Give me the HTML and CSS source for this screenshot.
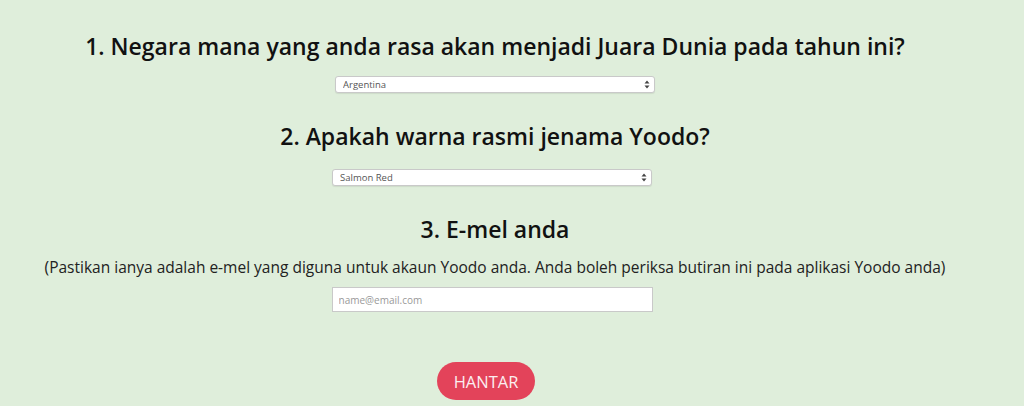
FILE: index.html
```html
<!DOCTYPE html>
<html lang="ms">
<head>
    <meta charset="UTF-8">
    <meta name="viewport" content="width=device-width, initial-scale=1.0">
    <title>Kuiz Yoodo</title>
    <link rel="stylesheet" href="styles.css">
</head>
<body>

    <form class="quiz" onsubmit="return false">

        <!-- Soalan 1 -->
        <h2 class="question q1">1. Negara mana yang anda rasa akan menjadi Juara Dunia pada tahun ini?</h2>
        <div class="select-wrap sw1">
            <select class="field select">
                <option>Argentina</option>
                <option>Brazil</option>
                <option>Perancis</option>
            </select>
            <svg class="arrows" width="6" height="9" viewBox="0 0 6 9"><path d="M3 0.5 L5.5 3.5 H0.5 Z M3 8.5 L5.5 5.5 H0.5 Z" fill="#444"/></svg>
        </div>

        <!-- Soalan 2 -->
        <h2 class="question q2">2. Apakah warna rasmi jenama Yoodo?</h2>
        <div class="select-wrap sw2">
            <select class="field select">
                <option>Salmon Red</option>
                <option>Sky Blue</option>
            </select>
            <svg class="arrows" width="6" height="9" viewBox="0 0 6 9"><path d="M3 0.5 L5.5 3.5 H0.5 Z M3 8.5 L5.5 5.5 H0.5 Z" fill="#444"/></svg>
        </div>

        <!-- Soalan 3 -->
        <h2 class="question q3">3. E-mel anda</h2>
        <p class="note">(Pastikan ianya adalah e-mel yang diguna untuk akaun Yoodo anda. Anda boleh periksa butiran ini pada aplikasi Yoodo anda)</p>
        <input class="field email" type="email" placeholder="name@email.com">

        <button class="submit" type="submit">HANTAR</button>
    </form>

</body>
</html>
```

FILE: styles.css
```css
body {
    margin: 0;
    background-color: #dfeedb;
    font-family: "Open Sans", "DejaVu Sans", sans-serif;
    color: #111;
}
.quiz {
    width: 990px;
    padding-top: 30px;
    display: flex;
    flex-direction: column;
    align-items: center;
    text-align: center;
}
.question {
    margin: 0;
    font-size: 23px;
    line-height: 32px;
    font-weight: 600;
    color: #111;
}
.q2, .q3 {
    margin-top: 27px;
}
.select-wrap {
    position: relative;
    width: 320px;
    height: 17px;
}
.sw1 {
    margin-top: 14px;
}
.sw2 {
    margin-top: 17px;
    left: -3px;
}
.field {
    box-sizing: border-box;
    background: #fff;
    border: 1px solid #c9c9c9;
    font-family: "Open Sans", "DejaVu Sans", sans-serif;
    color: #555;
}
.select {
    display: block;
    -webkit-appearance: none;
    appearance: none;
    width: 100%;
    height: 17px;
    padding: 0 0 0 7px;
    border-radius: 3px;
    font-size: 9.5px;
    line-height: 15px;
    box-shadow: 0 1px 1px rgba(0, 0, 0, 0.08);
}
.arrows {
    position: absolute;
    right: 5px;
    top: 4px;
}
.note {
    margin: 12px 0 0;
    font-size: 15.5px;
    line-height: 20px;
    color: #222;
}
.email {
    margin: 10px 6px 0 0;
    width: 321px;
    height: 25px;
    padding: 0 6px;
    font-size: 10px;
    border-radius: 0;
}
.email::placeholder {
    color: #999;
}
.submit {
    margin: 50px 18px 0 0;
    width: 98px;
    height: 38px;
    border: none;
    border-radius: 19px;
    background-color: #e3435a;
    color: #fbeef0;
    font-family: "Open Sans", "DejaVu Sans", sans-serif;
    font-size: 16.5px;
    cursor: pointer;
}
```
